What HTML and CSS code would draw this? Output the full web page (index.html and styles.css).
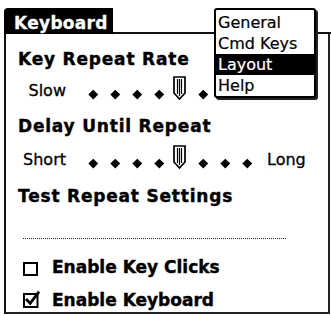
FILE: index.html
```html
<!DOCTYPE html>
<html>
<head>
<meta charset="utf-8">
<title>Keyboard</title>
<link rel="stylesheet" href="styles.css">
</head>
<body>
<div class="screen">
  <div class="titlebar">
    <div class="tab">Keyboard</div>
    <div class="titlerule"></div>
  </div>
  <div class="form">
    <div class="heading first">Key Repeat Rate</div>
    <div class="slider short-row">
      <span class="lbl">Slow</span>
      <div class="track">
        <span class="cell"><i class="dot"></i></span>
        <span class="cell"><i class="dot"></i></span>
        <span class="cell"><i class="dot"></i></span>
        <span class="cell"><i class="dot"></i></span>
        <span class="cell"><svg class="thumb" width="13" height="24" viewBox="0 0 13 24"><path d="M1 1H12V17L6.5 23L1 17Z" fill="#fff" stroke="#000" stroke-width="1.7" stroke-linejoin="miter"/><path d="M4.5 3V18M6.5 3V20M8.5 3V18" stroke="#000" stroke-width="1.2"/></svg></span>
        <span class="cell"><i class="dot"></i></span>
        <span class="cell"><i class="dot"></i></span>
        <span class="cell"><i class="dot"></i></span>
      </div>
      <span class="end">Fast</span>
    </div>
    <div class="heading">Delay Until Repeat</div>
    <div class="slider tall-row">
      <span class="lbl">Short</span>
      <div class="track">
        <span class="cell"><i class="dot"></i></span>
        <span class="cell"><i class="dot"></i></span>
        <span class="cell"><i class="dot"></i></span>
        <span class="cell"><i class="dot"></i></span>
        <span class="cell"><svg class="thumb" width="13" height="24" viewBox="0 0 13 24"><path d="M1 1H12V17L6.5 23L1 17Z" fill="#fff" stroke="#000" stroke-width="1.7" stroke-linejoin="miter"/><path d="M4.5 3V18M6.5 3V20M8.5 3V18" stroke="#000" stroke-width="1.2"/></svg></span>
        <span class="cell"><i class="dot"></i></span>
        <span class="cell"><i class="dot"></i></span>
        <span class="cell"><i class="dot"></i></span>
      </div>
      <span class="end">Long</span>
    </div>
    <div class="heading third">Test Repeat Settings</div>
    <div class="dotted"></div>
    <div class="check first-check">
      <span class="box"></span>
      <span class="ctext">Enable Key Clicks</span>
    </div>
    <div class="check second-check">
      <svg class="cbox" width="17" height="18" viewBox="0 0 17 18"><rect x="1" y="4" width="13.5" height="13" fill="#fff" stroke="#000" stroke-width="2"/><path d="M4 10L7.2 13.4L15.2 2.8" fill="none" stroke="#000" stroke-width="2.8" stroke-linecap="square"/></svg>
      <span class="ctext">Enable Keyboard</span>
    </div>
  </div>
  <div class="menu">
    <div class="item">General</div>
    <div class="item">Cmd Keys</div>
    <div class="item active">Layout</div>
    <div class="item">Help</div>
  </div>
</div>
</body>
</html>
```

FILE: styles.css
```css
html, body {
  margin: 0;
  padding: 0;
  background: #fff;
}

body {
  font-family: "DejaVu Sans", "Liberation Sans", sans-serif;
  color: #000;
}

.screen {
  position: relative;
  width: 331px;
  height: 315px;
  padding: 8px 0 0 4px;
  box-sizing: border-box;
  overflow: hidden;
}

.titlebar {
  display: flex;
  height: 26px;
}

.tab {
  flex: none;
  width: 109px;
  height: 26px;
  box-sizing: border-box;
  padding: 4px 0 0 10px;
  background: #000;
  color: #fff;
  border-radius: 4px 0 0 0;
  font-weight: bold;
  font-size: 17px;
  line-height: 22px;
  letter-spacing: 0.3px;
  -webkit-text-stroke: 0.3px #fff;
}

.titlerule {
  flex: 1;
  border-bottom: 2px solid #111;
}

.form {
  width: 326px;
  height: 280px;
  box-sizing: border-box;
  border-left: 2px solid #111;
  border-right: 2px solid #222;
  border-bottom: 2px solid #222;
  padding-top: 15px;
}

.heading {
  height: 20px;
  padding-left: 12px;
  font-weight: bold;
  font-size: 17px;
  line-height: 20px;
  letter-spacing: 0.8px;
  white-space: nowrap;
  margin-top: 16px;
  -webkit-text-stroke: 0.4px #000;
}

.heading.first {
  margin-top: 0;
}

.heading.third {
  margin-top: 17px;
}

.slider {
  display: flex;
  align-items: flex-end;
  font-size: 16px;
  line-height: 16px;
  -webkit-text-stroke: 0.3px #000;
}

.short-row {
  height: 31px;
}

.tall-row {
  height: 33px;
}

.lbl {
  flex: none;
  width: 60px;
  text-align: right;
  margin-bottom: 1px;
}

.track {
  display: flex;
  align-items: flex-end;
  margin-left: 16px;
}

.cell {
  flex: none;
  width: 22px;
  display: flex;
  justify-content: center;
  align-items: flex-end;
}

.dot {
  display: block;
  width: 6.5px;
  height: 6.5px;
  background: #000;
  transform: rotate(45deg);
  margin-bottom: 3px;
}

.thumb {
  display: block;
  margin-right: 3px;
}

.end {
  margin-left: 9px;
  margin-bottom: 1px;
}

.dotted {
  margin: 32px 0 0 17px;
  width: 264px;
  height: 1px;
  background: repeating-linear-gradient(90deg, #222 0 1px, transparent 1px 2px);
}

.check {
  display: flex;
  align-items: flex-start;
  height: 20px;
  padding-left: 17px;
  font-weight: bold;
  font-size: 17px;
  line-height: 20px;
  white-space: nowrap;
  -webkit-text-stroke: 0.4px #000;
}

.first-check {
  margin-top: 18px;
}

.second-check {
  margin-top: 13px;
}

.box {
  flex: none;
  display: block;
  width: 15px;
  height: 14px;
  box-sizing: border-box;
  border: 2px solid #000;
  margin-top: 5px;
  margin-right: 14px;
}

.cbox {
  flex: none;
  display: block;
  margin-top: 0;
  margin-right: 12px;
}

.menu {
  position: absolute;
  left: 214px;
  top: 8px;
  width: 102px;
  box-sizing: border-box;
  padding-top: 2px;
  border: 2px solid #000;
  border-radius: 3px;
  background: #fff;
  box-shadow: 2px 2px 0 #222;
}

.item {
  height: 21px;
  padding-left: 2px;
  font-size: 16px;
  line-height: 21px;
  white-space: nowrap;
  -webkit-text-stroke: 0.2px currentColor;
}

.item.active {
  background: #000;
  color: #fff;
}
```
